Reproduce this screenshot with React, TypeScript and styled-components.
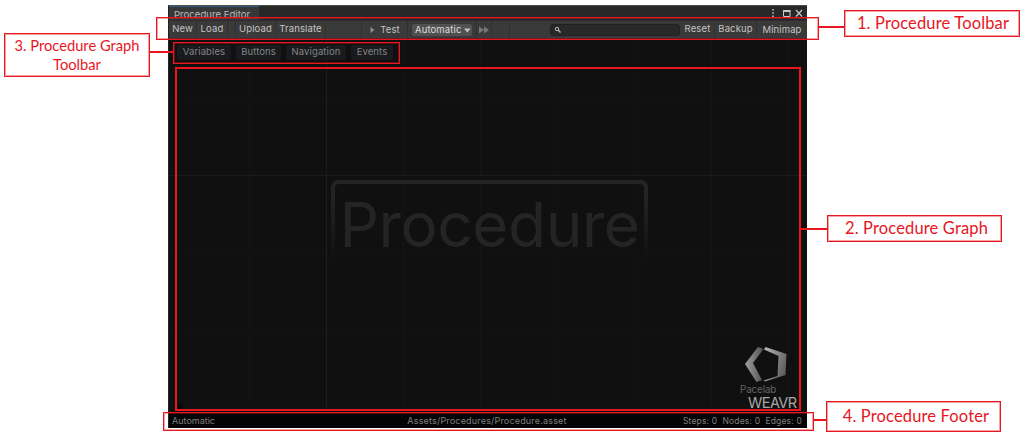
import React from "react";
import styled, { createGlobalStyle } from "styled-components";

const RED = "#e8161f";
const SOFT_RED = "rgba(232, 22, 31, 0.4)";

const GlobalStyle = createGlobalStyle`
  * { box-sizing: border-box; }
  body { margin: 0; background: #fff; overflow: hidden; }
`;

const Page = styled.main`
  position: relative;
  width: 1022px;
  height: 436px;
  padding: 5px 0 0 168px;
  font-family: Inter, "Liberation Sans", sans-serif;
  background: #fff;
`;

const EditorWindow = styled.section`
  display: flex;
  flex-direction: column;
  width: 639px;
  height: 423px;
  background: #111;
  border-left: 1px solid #20242a;
  border-top: 1px solid #4b4f4e;
  overflow: hidden;
`;

const TitleBar = styled.header`
  display: flex;
  justify-content: space-between;
  flex: none;
  height: 14px;
  background: #282828;
`;

const Tab = styled.div`
  width: 90px;
  height: 14px;
  padding: 2px 0 0 5px;
  background: #373737;
  border-top: 1px solid #2c5d87;
  color: #bdbdbd;
  font-size: 9.5px;
  line-height: 12px;
  letter-spacing: 0.05px;
  white-space: nowrap;
`;

const WindowIcons = styled.svg`
  width: 36px;
  height: 14px;
`;

const Toolbar = styled.div`
  display: flex;
  flex: none;
  height: 19px;
  background: #3a3a3a;
  border-top: 1px solid #2b2b2b;
  border-bottom: 1px solid #222;
`;

const Cell = styled.div<{ $w: number; $line?: boolean; $drop?: number }>`
  display: flex;
  align-items: center;
  justify-content: center;
  flex: none;
  width: ${(p) => p.$w}px;
  padding-top: ${(p) => p.$drop ?? 0}px;
  padding-bottom: ${(p) => (p.$drop ? 0 : 2)}px;
  border-right: ${(p) => (p.$line === false ? "0" : "1px solid #303030")};
  color: #c4c4c4;
  font-size: 9.5px;
  line-height: 14px;
  letter-spacing: 0.12px;
  white-space: nowrap;
`;

const Select = styled.div`
  display: flex;
  align-items: center;
  gap: 3px;
  width: 60px;
  height: 12px;
  padding-left: 3px;
  border-radius: 2px;
  background: #515151;
  color: #dedede;
`;

const SearchArea = styled.div`
  display: flex;
  flex: 1;
  align-items: center;
  justify-content: flex-end;
  padding: 1px 1px 0 0;
`;

const SearchField = styled.div`
  display: flex;
  align-items: center;
  width: 130px;
  height: 12px;
  padding-left: 3px;
  border: 1px solid #202020;
  border-radius: 3px;
  background: #292929;
`;

const Graph = styled.div`
  position: relative;
  flex: 1;
  padding: 6px 0 0 8px;
  background: #101010;
`;

const GridLines = styled.svg`
  position: absolute;
  inset: 0;
  width: 638px;
  height: 374px;
`;

const GraphToolbar = styled.nav`
  position: relative;
  display: flex;
  gap: 5px;
`;

const GraphButton = styled.div<{ $w: number }>`
  width: ${(p) => p.$w}px;
  height: 15px;
  border-radius: 2px;
  background: #191a1e;
  color: #848484;
  font-size: 9.5px;
  line-height: 14px;
  letter-spacing: 0.1px;
  text-align: center;
  white-space: nowrap;
`;

const Watermark = styled.div`
  position: absolute;
  left: 162px;
  top: 141px;
  width: 317px;
  height: 82px;
  color: #242424;
  font-size: 62px;
  line-height: 90px;
  letter-spacing: -0.4px;
  text-align: center;
  white-space: nowrap;
`;

const WatermarkFrame = styled.svg`
  position: absolute;
  inset: 0;
`;

const Brand = styled.div`
  position: absolute;
  left: 569px;
  top: 308px;
  width: 60px;
  height: 65px;
`;

const BrandMark = styled.svg`
  display: block;
  width: 60px;
  height: 37px;
`;

const BrandLine = styled.div<{ $big?: boolean }>`
  padding-left: ${(p) => (p.$big ? 10 : 2)}px;
  color: ${(p) => (p.$big ? "#a8a8a8" : "#646464")};
  font-size: ${(p) => (p.$big ? 14.5 : 9.8)}px;
  line-height: ${(p) => (p.$big ? 14 : 12)}px;
  letter-spacing: ${(p) => (p.$big ? -0.55 : -0.1)}px;
  white-space: nowrap;
`;

const Footer = styled.footer`
  display: grid;
  grid-template-columns: 1fr auto 1fr;
  flex: none;
  height: 16px;
  padding: 2px 5px 0 3px;
  background: #040404;
  color: #808080;
  font-size: 9px;
  line-height: 14px;
  letter-spacing: 0.18px;
  white-space: pre;
`;

const FooterMode = styled.span`
  letter-spacing: 0;
`;

const Stats = styled.span`
  text-align: right;
  font-size: 8.5px;
`;

const Outline = styled.div<{ $x: number; $y: number; $w: number; $h: number; $b?: number }>`
  position: absolute;
  left: ${(p) => p.$x}px;
  top: ${(p) => p.$y}px;
  width: ${(p) => p.$w}px;
  height: ${(p) => p.$h}px;
  border: ${(p) => p.$b ?? 1}px solid ${RED};
  box-shadow: ${(p) => (p.$b ? "none" : `inset 0 0 0 1px ${SOFT_RED}`)};
`;

const Connector = styled.div<{ $x: number; $y: number; $w: number }>`
  position: absolute;
  left: ${(p) => p.$x}px;
  top: ${(p) => p.$y}px;
  width: ${(p) => p.$w}px;
  height: 2px;
  background: ${RED};
`;

const Callout = styled(Outline)<{ $size?: number; $shift?: number }>`
  display: flex;
  align-items: center;
  justify-content: center;
  padding-left: ${(p) => p.$shift ?? 0}px;
  background: #fff;
  color: ${RED};
  font-family: Lato, "Liberation Sans", sans-serif;
  font-size: ${(p) => p.$size ?? 16.5}px;
  line-height: 19px;
  letter-spacing: ${(p) => (p.$size ? 0 : 0.15)}px;
  text-align: center;
  white-space: pre;
`;

const verticals = [80, 234, 311, 388, 465, 542, 619];
const horizontals = [59, 213, 290, 367];

export default function App() {
  return (
    <Page>
      <GlobalStyle />
      <EditorWindow>
        <TitleBar>
          <Tab>Procedure Editor</Tab>
          <WindowIcons viewBox="0 0 36 14" fill="none" stroke="#c8c8c8">
            <path d="M2 3v1.500M2 6.300v1.500M2 9.600v1.500" strokeWidth="1.5" />
            <path d="M12.500 5v5.500h6.500V5" />
            <path d="M12 5h7.500" strokeWidth="2" />
            <path d="M25 4l6 6.500M31 4l-6 6.500" strokeWidth="1.2" />
          </WindowIcons>
        </TitleBar>
        <Toolbar>
          <Cell $w={28}>New</Cell>
          <Cell $w={31}>Load</Cell>
          <Cell $w={8} />
          <Cell $w={40}>Upload</Cell>
          <Cell $w={50}>Translate</Cell>
          <Cell $w={36} />
          <Cell $w={46} $drop={1}>
            <svg width="11" height="8" viewBox="0 0 11 8">
              <path d="M1.500 1l4 3-4 3z" fill="#8c8c8c" />
            </svg>
            Test
          </Cell>
          <Cell $w={69} $drop={1}>
            <Select>
              Automatic
              <svg width="7" height="5" viewBox="0 0 7 5">
                <path d="M0 0.500h6.500L3.250 4.500z" fill="#c4c4c4" />
              </svg>
            </Select>
          </Cell>
          <Cell $w={15} $drop={1}>
            <svg width="11" height="8" viewBox="0 0 11 8">
              <path d="M0 0.500l5 3.500L0 7.500zM5 0.500L10 4 5 7.500z" fill="#777" />
            </svg>
          </Cell>
          <Cell $w={18} />
          <SearchArea>
            <SearchField>
              <svg width="8" height="8" viewBox="0 0 8 8" fill="none" stroke="#bbb">
                <circle cx="3" cy="3" r="1.700" />
                <path d="M4.300 4.300L6.500 6.500" strokeWidth="1.300" />
              </svg>
            </SearchField>
          </SearchArea>
          <Cell $w={34}>Reset</Cell>
          <Cell $w={42}>Backup</Cell>
          <Cell $w={50} $line={false} $drop={1}>Minimap</Cell>
        </Toolbar>
        <Graph>
          <GridLines viewBox="0 0 638 374">
            {verticals.map((x) => (
              <path key={x} d={`M${x + 0.5} 0V374`} stroke="#141414" />
            ))}
            {horizontals.map((y) => (
              <path key={y} d={`M0 ${y + 0.5}H638`} stroke="#131313" />
            ))}
            <path d="M157.500 0V374M0 136.500H638" stroke="#1c1c1c" />
            <circle cx="11" cy="367" r="3" fill="#080808" />
          </GridLines>
          <GraphToolbar>
            <GraphButton $w={54}>Variables</GraphButton>
            <GraphButton $w={45}>Buttons</GraphButton>
            <GraphButton $w={60}>Navigation</GraphButton>
            <GraphButton $w={42}>Events</GraphButton>
          </GraphToolbar>
          <Watermark>
            <WatermarkFrame width="317" height="82" viewBox="0 0 317 82">
              <defs>
                <linearGradient id="fade" gradientUnits="userSpaceOnUse" x1="0" y1="0" x2="0" y2="80">
                  <stop offset="0.2" stopColor="#242424" />
                  <stop offset="1" stopColor="#242424" stopOpacity="0" />
                </linearGradient>
              </defs>
              <path d="M2 80V8q0-6 6-6H309q6 0 6 6V80" fill="none" stroke="url(#fade)" strokeWidth="4" />
            </WatermarkFrame>
            Procedure
          </Watermark>
          <Brand>
            <BrandMark viewBox="0 0 60 37">
              <defs>
                <linearGradient id="left" x1="0" y1="0" x2="1" y2="0">
                  <stop stopColor="#a0a0a0" />
                  <stop offset="1" stopColor="#505050" />
                </linearGradient>
                <linearGradient id="right" x1="0" y1="0" x2="1" y2="0.5">
                  <stop stopColor="#bbb" />
                  <stop offset="1" stopColor="#606060" />
                </linearGradient>
              </defs>
              <path d="M20 0L25.500 2 15 16 24 33 18.500 35 7 17z" fill="url(#left)" />
              <path d="M27.500 0L48.500 7 47.500 28 27 34.500 25.500 33.500 39.500 29 40.500 9 26 2.500z" fill="url(#right)" />
            </BrandMark>
            <BrandLine>Pacelab</BrandLine>
            <BrandLine $big>WEAVR</BrandLine>
          </Brand>
        </Graph>
        <Footer>
          <FooterMode>Automatic</FooterMode>
          <span>Assets/Procedures/Procedure.asset</span>
          <Stats>{"Steps: 0  Nodes: 0  Edges: 0"}</Stats>
        </Footer>
      </EditorWindow>

      <Outline $x={156} $y={17} $w={663} $h={23} />
      <Outline $x={173} $y={42} $w={227} $h={22} />
      <Outline $x={175} $y={67} $w={626} $h={344} $b={2} />
      <Outline $x={163} $y={412} $w={651} $h={19} />
      <Connector $x={818} $y={26} $w={27} />
      <Connector $x={149} $y={51} $w={25} />
      <Connector $x={800} $y={228} $w={28} />
      <Connector $x={813} $y={419} $w={14} />
      <Callout $x={844} $y={10} $w={176} $h={27} $shift={2}>1. Procedure Toolbar</Callout>
      <Callout $x={827} $y={215} $w={175} $h={27} $shift={4}>2. Procedure Graph</Callout>
      <Callout $x={4} $y={33} $w={146} $h={44} $size={14.7}>{"3. Procedure Graph\nToolbar"}</Callout>
      <Callout $x={826} $y={401} $w={175} $h={31} $shift={5}>4. Procedure Footer</Callout>
    </Page>
  );
}
